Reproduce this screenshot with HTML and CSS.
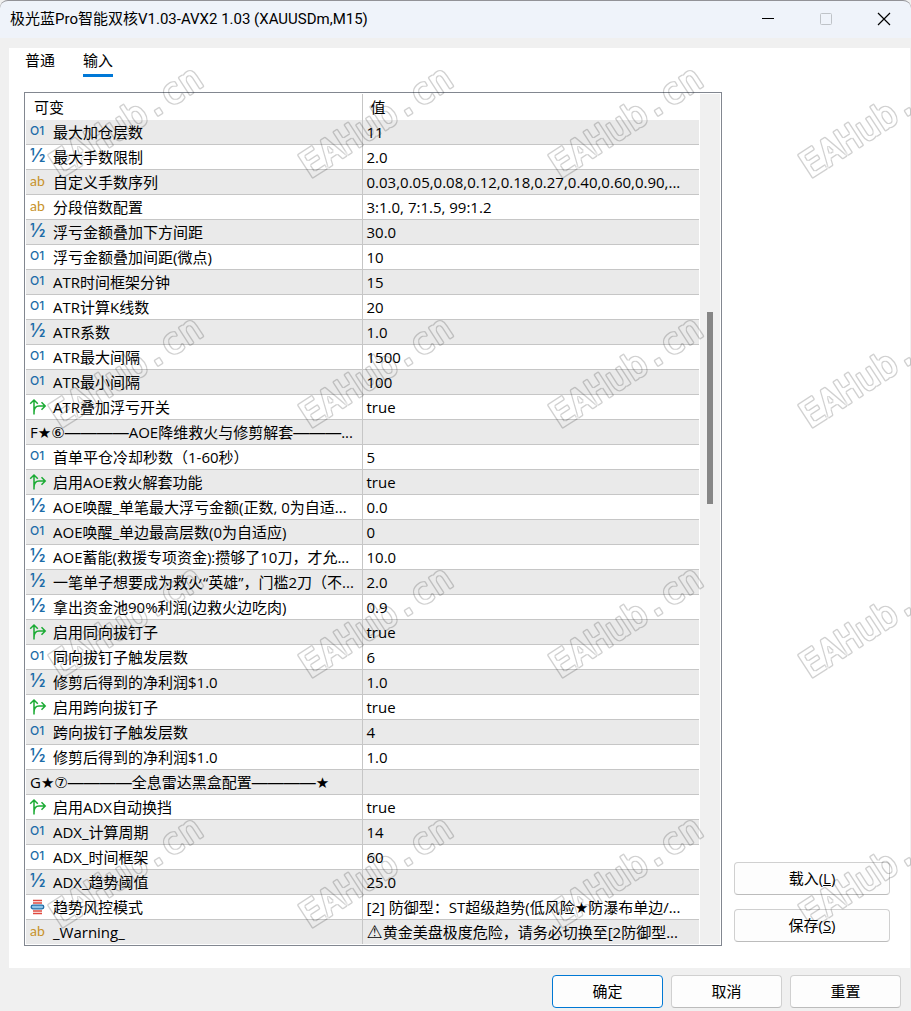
FILE: index.html
```html
<!DOCTYPE html>
<html lang="zh-CN">
<head>
    <meta charset="UTF-8">
    <meta name="viewport" content="width=device-width, initial-scale=1.0">
    <title>极光蓝Pro智能双核V1.03-AVX2 1.03 (XAUUSDm,M15)</title>
    <link rel="stylesheet" href="styles.css">
</head>
<body>
    <svg class="sprite" aria-hidden="true">
        <symbol id="bool" viewBox="0 0 18 18">
            <path d="M5 16.5V2.5M1.2 5.8L5 2L8.8 5.8M5 14.5C5 10 7 8 10 8H16M12.5 4.3L16.2 8L12.5 11.7" fill="none" stroke="#1aab33" stroke-width="1.5"/>
        </symbol>
        <symbol id="enum" viewBox="0 0 18 18">
            <path d="M4 2.5H13M4 5H13M4 13H13M4 15.5H13" stroke="#e0483e" stroke-width="1.4"/>
            <rect x="2.2" y="7.2" width="12.6" height="3.6" rx="1.8" fill="#8fc3e6" stroke="#1c6ca8" stroke-width="1.3"/>
        </symbol>
        <filter id="outline" x="0" y="0" width="100%" height="100%">
            <feMorphology in="SourceGraphic" operator="erode" radius="1" result="inner"/>
            <feComposite in="SourceGraphic" in2="inner" operator="out"/>
        </filter>
    </svg>

    <header class="titlebar">
        <h1>极光蓝Pro智能双核V1.03-AVX2 1.03 (XAUUSDm,M15)</h1>
        <div class="controls">
            <button aria-label="最小化"><svg viewBox="0 0 14 14"><path d="M1 6.5H13" stroke="#000"/></svg></button>
            <button aria-label="最大化" disabled><svg viewBox="0 0 14 14"><rect x="1.5" y="1.5" width="11" height="11" rx="1" fill="none" stroke="#bfc3c8"/></svg></button>
            <button aria-label="关闭"><svg viewBox="0 0 14 14"><path d="M1 1L13 13M13 1L1 13" stroke="#000" stroke-width="1.2"/></svg></button>
        </div>
    </header>

    <main class="panel">
        <nav class="tabs">
            <button>普通</button>
            <button class="active">输入</button>
        </nav>
        <div class="content">
            <div class="frame">
                <table>
                    <thead>
                        <tr><th>可变</th><th>值</th></tr>
                    </thead>
                    <tbody>
                        <tr><td><i class="num">O1</i>最大加仓层数</td><td>11</td></tr>
                        <tr><td><i class="frac">½</i>最大手数限制</td><td>2.0</td></tr>
                        <tr><td><i class="str">ab</i>自定义手数序列</td><td>0.03,0.05,0.08,0.12,0.18,0.27,0.40,0.60,0.90,...</td></tr>
                        <tr><td><i class="str">ab</i>分段倍数配置</td><td>3:1.0, 7:1.5, 99:1.2</td></tr>
                        <tr><td><i class="frac">½</i>浮亏金额叠加下方间距</td><td>30.0</td></tr>
                        <tr><td><i class="num">O1</i>浮亏金额叠加间距(微点)</td><td>10</td></tr>
                        <tr><td><i class="num">O1</i>ATR时间框架分钟</td><td>15</td></tr>
                        <tr><td><i class="num">O1</i>ATR计算K线数</td><td>20</td></tr>
                        <tr><td><i class="frac">½</i>ATR系数</td><td>1.0</td></tr>
                        <tr><td><i class="num">O1</i>ATR最大间隔</td><td>1500</td></tr>
                        <tr><td><i class="num">O1</i>ATR最小间隔</td><td>100</td></tr>
                        <tr><td><svg class="icon"><use href="#bool"/></svg>ATR叠加浮亏开关</td><td>true</td></tr>
                        <tr><td class="section">F★⑥<span class="dash">————</span>AOE降维救火与修剪解套<span class="dash">———</span>...</td><td></td></tr>
                        <tr><td><i class="num">O1</i>首单平仓冷却秒数（1-60秒）</td><td>5</td></tr>
                        <tr><td><svg class="icon"><use href="#bool"/></svg>启用AOE救火解套功能</td><td>true</td></tr>
                        <tr><td><i class="frac">½</i>AOE唤醒_单笔最大浮亏金额(正数, 0为自适...</td><td>0.0</td></tr>
                        <tr><td><i class="num">O1</i>AOE唤醒_单边最高层数(0为自适应)</td><td>0</td></tr>
                        <tr><td><i class="frac">½</i>AOE蓄能(救援专项资金):攒够了10刀，才允...</td><td>10.0</td></tr>
                        <tr><td><i class="frac">½</i>一笔单子想要成为救火“英雄”，门槛2刀（不...</td><td>2.0</td></tr>
                        <tr><td><i class="frac">½</i>拿出资金池90%利润(边救火边吃肉)</td><td>0.9</td></tr>
                        <tr><td><svg class="icon"><use href="#bool"/></svg>启用同向拔钉子</td><td>true</td></tr>
                        <tr><td><i class="num">O1</i>同向拔钉子触发层数</td><td>6</td></tr>
                        <tr><td><i class="frac">½</i>修剪后得到的净利润$1.0</td><td>1.0</td></tr>
                        <tr><td><svg class="icon"><use href="#bool"/></svg>启用跨向拔钉子</td><td>true</td></tr>
                        <tr><td><i class="num">O1</i>跨向拔钉子触发层数</td><td>4</td></tr>
                        <tr><td><i class="frac">½</i>修剪后得到的净利润$1.0</td><td>1.0</td></tr>
                        <tr><td class="section">G★⑦<span class="dash">————</span>全息雷达黑盒配置<span class="dash">————</span>★</td><td></td></tr>
                        <tr><td><svg class="icon"><use href="#bool"/></svg>启用ADX自动换挡</td><td>true</td></tr>
                        <tr><td><i class="num">O1</i>ADX_计算周期</td><td>14</td></tr>
                        <tr><td><i class="num">O1</i>ADX_时间框架</td><td>60</td></tr>
                        <tr><td><i class="frac">½</i>ADX_趋势阈值</td><td>25.0</td></tr>
                        <tr><td><svg class="icon"><use href="#enum"/></svg>趋势风控模式</td><td>[2] 防御型：ST超级趋势(低风险★防瀑布单边/...</td></tr>
                        <tr><td><i class="str">ab</i>_Warning_</td><td><span class="warn">⚠</span>黄金美盘极度危险，请务必切换至[2防御型...</td></tr>
                    </tbody>
                </table>
                <div class="scrollbar"><div class="thumb"></div></div>
            </div>
            <div class="side">
                <button class="btn">载入(<u>L</u>)</button>
                <button class="btn">保存(<u>S</u>)</button>
            </div>
        </div>
    </main>

    <footer class="footer">
        <button class="btn primary">确定</button>
        <button class="btn">取消</button>
        <button class="btn">重置</button>
    </footer>

    <!-- Tiled watermark over the whole window -->
    <svg class="watermark" aria-hidden="true">
        <g transform="translate(60 179)"><text transform="rotate(-33)">EAHub.cn</text></g>
        <g transform="translate(310 179)"><text transform="rotate(-33)">EAHub.cn</text></g>
        <g transform="translate(560 179)"><text transform="rotate(-33)">EAHub.cn</text></g>
        <g transform="translate(810 179)"><text transform="rotate(-33)">EAHub.cn</text></g>
        <g transform="translate(60 429)"><text transform="rotate(-33)">EAHub.cn</text></g>
        <g transform="translate(310 429)"><text transform="rotate(-33)">EAHub.cn</text></g>
        <g transform="translate(560 429)"><text transform="rotate(-33)">EAHub.cn</text></g>
        <g transform="translate(810 429)"><text transform="rotate(-33)">EAHub.cn</text></g>
        <g transform="translate(60 679)"><text transform="rotate(-33)">EAHub.cn</text></g>
        <g transform="translate(310 679)"><text transform="rotate(-33)">EAHub.cn</text></g>
        <g transform="translate(560 679)"><text transform="rotate(-33)">EAHub.cn</text></g>
        <g transform="translate(810 679)"><text transform="rotate(-33)">EAHub.cn</text></g>
        <g transform="translate(60 929)"><text transform="rotate(-33)">EAHub.cn</text></g>
        <g transform="translate(310 929)"><text transform="rotate(-33)">EAHub.cn</text></g>
        <g transform="translate(560 929)"><text transform="rotate(-33)">EAHub.cn</text></g>
        <g transform="translate(810 929)"><text transform="rotate(-33)">EAHub.cn</text></g>
    </svg>
</body>
</html>
```
FILE: styles.css
```css
* {
    box-sizing: border-box;
}
body {
    position: relative;
    margin: 0;
    min-height: 100vh;
    display: flex;
    flex-direction: column;
    background-color: #f0f0f0;
    color: #000;
    font-family: "Open Sans", "DejaVu Sans", "Noto Sans CJK SC", sans-serif;
    font-size: 15px;
    line-height: 24px;
}
button {
    font: inherit;
    color: inherit;
    cursor: pointer;
}
.sprite {
    position: absolute;
    width: 0;
    height: 0;
}

/* Title bar */
.titlebar {
    display: flex;
    align-items: center;
    height: 38px;
    padding: 0 4px 2px 10px;
    border-top: 1px solid #929297;
    border-radius: 8px 8px 0 0;
    background-color: #eff3fa;
}
.titlebar h1 {
    flex: 1;
    margin: 0;
    font-family: Roboto, "Noto Sans CJK SC", sans-serif;
    font-size: 15px;
    font-weight: normal;
}
.controls {
    display: flex;
    gap: 12px;
}
.controls button {
    width: 46px;
    height: 34px;
    padding: 0;
    border: none;
    background: none;
}
.controls svg {
    display: block;
    width: 14px;
    height: 14px;
    margin: 0 auto;
}

/* Main panel */
.panel {
    flex: 1;
    margin: 10px 1px 0 9px;
    padding: 0 20px 22px 15px;
    background-color: #fff;
}
.tabs {
    display: flex;
    gap: 28px;
    height: 44px;
    padding-left: 1px;
}
.tabs button {
    height: 29px;
    padding: 0 0 2px;
    border: none;
    border-bottom: 3px solid transparent;
    background: none;
}
.tabs .active {
    border-bottom-color: #0078d7;
}
.content {
    display: flex;
    gap: 12px;
}
.frame {
    flex: 1;
    display: flex;
    gap: 1px;
    padding: 1px;
    border: 1px solid #828790;
}
table {
    flex: 1;
    width: 0;
    table-layout: fixed;
    border-collapse: separate;
    border-spacing: 0;
}
th,
td {
    padding: 0 4px;
    white-space: nowrap;
    overflow: hidden;
    text-align: left;
    font-weight: normal;
}
th {
    height: 26px;
    padding-left: 8px;
}
th:first-child,
td:first-child {
    width: 50%;
    border-right: 1px solid #c6c6c6;
}
td {
    height: 25px;
    border-bottom: 1px solid #c6c6c6;
}
tbody tr:nth-child(odd) {
    background-color: #eaeaea;
}
tbody tr:last-child td {
    height: 24px;
    border-bottom: none;
}
td i,
.icon {
    display: inline-block;
    width: 23px;
    height: 18px;
    vertical-align: top;
}
td i {
    font-style: normal;
    line-height: 22px;
}
.icon {
    width: 18px;
    margin: 3px 6px 0 -1px;
}
.num {
    color: #1c6ca8;
    font-family: Inter, sans-serif;
    font-size: 12px;
    font-weight: 500;
}
.frac {
    color: #1c6ca8;
    font-family: Inter, sans-serif;
    font-size: 18px;
    font-weight: 500;
}
.str {
    color: #c8922a;
    font-family: Lato, sans-serif;
    font-size: 14px;
}
.dash {
    font-family: "Liberation Sans", sans-serif;
    font-size: 16px;
    line-height: 16px;
}
.warn {
    font-size: 18px;
    line-height: 16px;
}
.scrollbar {
    display: grid;
    grid-template-rows: 218fr 192fr 440fr;
    justify-items: center;
    width: 20px;
    background-color: #f0f0f0;
}
.thumb {
    grid-row: 2;
    width: 6px;
    background-color: #868686;
}

/* Buttons */
.side {
    display: flex;
    flex-direction: column;
    justify-content: flex-end;
    gap: 14px;
    width: 156px;
    padding-bottom: 4px;
}
.btn {
    height: 33px;
    padding: 0 0 2px;
    border: 1px solid #d0d0d0;
    border-bottom-color: #bcbcbc;
    border-radius: 4px;
    background-color: #fdfdfd;
}
.btn.primary {
    border-color: #0078d4;
}
.footer {
    display: flex;
    justify-content: flex-end;
    gap: 8px;
    padding: 7px 10px 3px;
}
.footer .btn {
    width: 111px;
}

.watermark {
    position: absolute;
    inset: 0;
    width: 100%;
    height: 100%;
    pointer-events: none;
    opacity: 0.18;
    filter: url(#outline);
    fill: #000;
    stroke: #000;
    stroke-width: 3px;
    stroke-linejoin: round;
    font-family: "DejaVu Sans Mono", monospace;
    font-size: 36px;
}
```
